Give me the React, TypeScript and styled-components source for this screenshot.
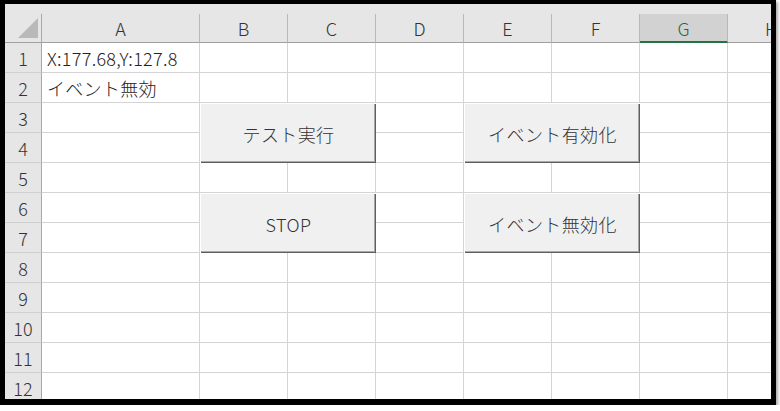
import React from "react";
import styled, { createGlobalStyle } from "styled-components";

const Global = createGlobalStyle`
  html, body { margin: 0; padding: 0; background: #ffffff; }
  body { font-family: "Noto Sans CJK JP", "Noto Sans", sans-serif; }
`;

const FONT = `"Noto Sans CJK JP", "Noto Sans", sans-serif`;

const Frame = styled.div`
  width: 766px;
  height: 395px;
  border-style: solid;
  border-color: #000;
  border-width: 4px 5px 6px 5px;
  box-shadow: 2px 2px 3px rgba(0, 0, 0, 0.35);
  overflow: hidden;
  background: #fff;
`;

const TopStrip = styled.div`
  height: 10px;
  background: #e6e6e6;
`;

const Sheet = styled.div`
  display: grid;
  grid-template-columns: 37px 158px repeat(7, 88px);
  grid-template-rows: 29px repeat(12, 30px);
  font-family: ${FONT};
  font-size: 18px;
  font-weight: 300;
`;

const Corner = styled.div`
  background: #e6e6e6;
  border-right: 1px solid #a8a8a8;
  border-bottom: 1px solid #a0a0a0;
  position: relative;
  box-sizing: border-box;
`;

const Triangle = styled.div`
  position: absolute;
  right: 3px;
  bottom: 4px;
  width: 0;
  height: 0;
  border-style: solid;
  border-width: 0 0 20px 20px;
  border-color: transparent transparent #b9b9b9 transparent;
`;

const ColHead = styled.div<{ $active?: boolean }>`
  box-sizing: border-box;
  background: ${(p) => (p.$active ? "#d2d2d2" : "#e6e6e6")};
  border-right: 1px solid #b8b8b8;
  border-bottom: ${(p) => (p.$active ? "2px solid #217346" : "1px solid #a0a0a0")};
  color: ${(p) => (p.$active ? "#1d6b40" : "#333")};
  display: flex;
  align-items: center;
  justify-content: center;
  line-height: 1;
  padding-top: ${(p) => (p.$active ? "1px" : "0")};
`;

const RowHead = styled.div`
  box-sizing: border-box;
  background: #e6e6e6;
  border-right: 1px solid #a8a8a8;
  border-bottom: 1px solid #cfcfcf;
  color: #333;
  display: flex;
  align-items: center;
  justify-content: center;
  line-height: 1;
`;

const Cell = styled.div`
  box-sizing: border-box;
  border-right: 1px solid #d4d4d4;
  border-bottom: 1px solid #d4d4d4;
  color: #222;
  display: flex;
  align-items: center;
  padding-left: 5px;
  white-space: nowrap;
  overflow: visible;
  line-height: 1;
  letter-spacing: 0.3px;
`;

const SheetButton = styled.button<{ $col: number; $row: number }>`
  grid-column: ${(p) => p.$col} / span 2;
  grid-row: ${(p) => p.$row} / span 2;
  z-index: 1;
  margin: 1px 0 0 1px;
  border: none;
  padding: 0;
  background: #f0f0f0;
  box-shadow: inset -1px -1px 0 #5e5e5e, inset -2px -2px 0 #a9a9a9;
  font-family: ${FONT};
  font-size: 18px;
  font-weight: 300;
  color: #333;
  letter-spacing: 0.4px;
  display: flex;
  align-items: center;
  justify-content: center;
  cursor: default;
`;

const columns = ["A", "B", "C", "D", "E", "F", "G", "H"];
const rows = Array.from({ length: 12 }, (_, i) => i + 1);

const cellText: Record<string, string> = {
  A1: "X:177.68,Y:127.8",
  A2: "イベント無効",
};

type Btn = { label: string; col: string; row: number };
const buttons: Btn[] = [
  { label: "テスト実行", col: "B", row: 3 },
  { label: "イベント有効化", col: "E", row: 3 },
  { label: "STOP", col: "B", row: 6 },
  { label: "イベント無効化", col: "E", row: 6 },
];

const covered = new Set<string>();
buttons.forEach((b) => {
  const ci = columns.indexOf(b.col);
  for (let dc = 0; dc < 2; dc++)
    for (let dr = 0; dr < 2; dr++) covered.add(columns[ci + dc] + (b.row + dr));
});

export default function App() {
  return (
    <>
      <Global />
      <Frame>
        <TopStrip />
        <Sheet>
          <Corner>
            <Triangle />
          </Corner>
          {columns.map((c) => (
            <ColHead key={c} $active={c === "G"}>
              {c}
            </ColHead>
          ))}
          {rows.map((r) => (
            <React.Fragment key={r}>
              <RowHead>{r}</RowHead>
              {columns
                .filter((c) => !covered.has(c + r))
                .map((c) => (
                  <Cell key={c + r}>{cellText[c + r] ?? ""}</Cell>
                ))}
            </React.Fragment>
          ))}
          {buttons.map((b) => (
            <SheetButton
              key={b.label}
              $col={columns.indexOf(b.col) + 2}
              $row={b.row + 1}
            >
              {b.label}
            </SheetButton>
          ))}
        </Sheet>
      </Frame>
    </>
  );
}
